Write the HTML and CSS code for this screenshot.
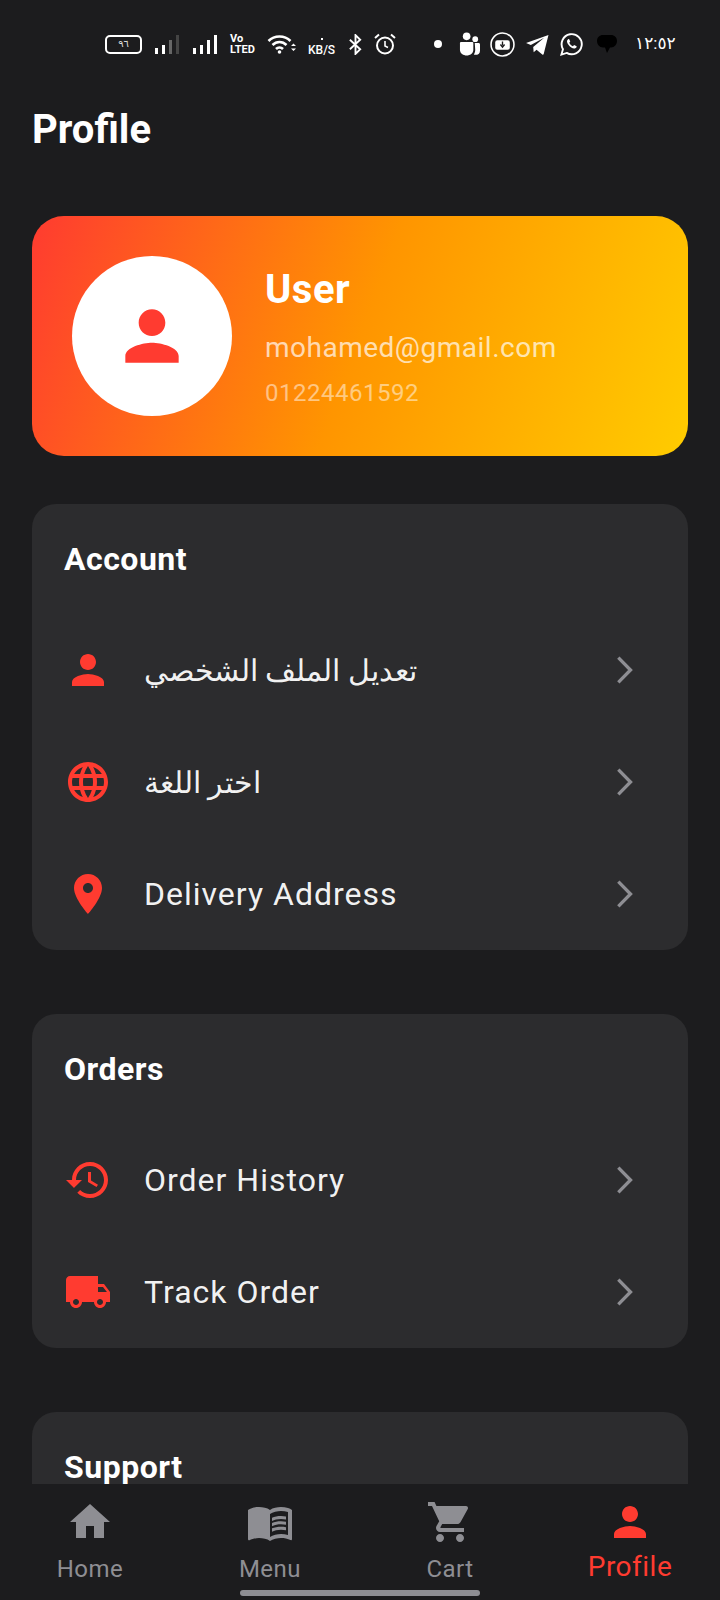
FILE: index.html
```html
<!DOCTYPE html>
<html lang="en">
<head>
    <meta charset="UTF-8">
    <meta name="viewport" content="width=device-width, initial-scale=1.0">
    <title>Profile</title>
    <link rel="stylesheet" href="styles.css">
</head>
<body>

<svg class="sprite" aria-hidden="true">
    <symbol id="i-person" viewBox="0 0 24 24"><path d="M12 12c2.21 0 4-1.79 4-4s-1.79-4-4-4-4 1.79-4 4 1.79 4 4 4zm0 2c-2.67 0-8 1.34-8 4v2h16v-2c0-2.66-5.33-4-8-4z"/></symbol>
    <symbol id="i-language" viewBox="0 0 24 24"><path d="M11.99 2C6.47 2 2 6.48 2 12s4.47 10 9.99 10C17.52 22 22 17.52 22 12S17.52 2 11.99 2zm6.93 6h-2.95c-.32-1.25-.78-2.45-1.38-3.56 1.84.63 3.37 1.91 4.33 3.56zM12 4.04c.83 1.2 1.48 2.53 1.91 3.96h-3.82c.43-1.43 1.08-2.76 1.91-3.96zM4.26 14C4.1 13.36 4 12.69 4 12s.1-1.36.26-2h3.38c-.08.66-.14 1.32-.14 2 0 .68.06 1.34.14 2H4.26zm.82 2h2.95c.32 1.25.78 2.45 1.38 3.56-1.84-.63-3.37-1.9-4.33-3.56zm2.95-8H5.08c.96-1.66 2.49-2.93 4.33-3.56C8.81 5.55 8.35 6.75 8.03 8zM12 19.96c-.83-1.2-1.48-2.53-1.91-3.96h3.82c-.43 1.43-1.08 2.76-1.91 3.96zM14.34 14H9.66c-.09-.66-.16-1.32-.16-2 0-.68.07-1.35.16-2h4.68c.09.65.16 1.32.16 2 0 .68-.07 1.34-.16 2zm.25 5.56c.6-1.11 1.06-2.31 1.38-3.56h2.95c-.96 1.65-2.49 2.93-4.33 3.56zM16.36 14c.08-.66.14-1.32.14-2 0-.68-.06-1.34-.14-2h3.38c.16.64.26 1.31.26 2s-.1 1.36-.26 2h-3.38z"/></symbol>
    <symbol id="i-location" viewBox="0 0 24 24"><path d="M12 2C8.13 2 5 5.13 5 9c0 5.25 7 13 7 13s7-7.75 7-13c0-3.87-3.13-7-7-7zm0 9.5c-1.38 0-2.5-1.12-2.5-2.5s1.12-2.5 2.5-2.5 2.5 1.12 2.5 2.5-1.12 2.5-2.5 2.5z"/></symbol>
    <symbol id="i-history" viewBox="0 0 24 24"><path d="M13 3c-4.97 0-9 4.03-9 9H1l3.89 3.89.07.14L9 12H6c0-3.87 3.13-7 7-7s7 3.13 7 7-3.13 7-7 7c-1.93 0-3.68-.79-4.94-2.06l-1.42 1.42C8.27 19.99 10.51 21 13 21c4.97 0 9-4.03 9-9s-4.03-9-9-9zm-1 5v5l4.28 2.54.72-1.21-3.5-2.08V8H12z"/></symbol>
    <symbol id="i-truck" viewBox="0 0 24 24"><path d="M20 8h-3V4H3c-1.1 0-2 .9-2 2v11h2c0 1.66 1.34 3 3 3s3-1.34 3-3h6c0 1.66 1.34 3 3 3s3-1.34 3-3h2v-5l-3-4zM6 18.5c-.83 0-1.5-.67-1.5-1.5s.67-1.5 1.5-1.5 1.5.67 1.5 1.5-.67 1.5-1.5 1.5zm13.5-9l1.96 2.5H17V9.5h2.5zm-1.5 9c-.83 0-1.5-.67-1.5-1.5s.67-1.5 1.5-1.5 1.5.67 1.5 1.5-.67 1.5-1.5 1.5z"/></symbol>
    <symbol id="i-chevron" viewBox="0 0 24 24"><path d="M8.6 4.6L15.9 12l-7.3 7.4" fill="none" stroke="currentColor" stroke-width="2"/></symbol>
    <symbol id="i-home" viewBox="0 0 24 24"><path d="M10 20v-6h4v6h5v-8h3L12 3 2 12h3v8z"/></symbol>
    <symbol id="i-book" viewBox="0 0 24 24"><path d="M21 5c-1.11-.35-2.33-.5-3.5-.5-1.95 0-4.05.4-5.5 1.5-1.45-1.1-3.55-1.5-5.5-1.5S2.45 4.9 1 6v14.65c0 .25.25.5.5.5.1 0 .15-.05.25-.05C3.1 20.45 5.05 20 6.5 20c1.95 0 4.05.4 5.5 1.5 1.35-.85 3.8-1.5 5.5-1.5 1.65 0 3.35.3 4.75 1.05.1.05.15.05.25.05.25 0 .5-.25.5-.5V6c-.6-.45-1.25-.75-2-1zm0 13.5c-1.1-.35-2.3-.5-3.5-.5-1.7 0-4.15.65-5.5 1.5V8c1.35-.85 3.8-1.5 5.5-1.5 1.2 0 2.4.15 3.5.5v11.5z"/><path d="M17.5 10.5c.88 0 1.73.09 2.5.26V9.24c-.79-.15-1.64-.24-2.5-.24-1.7 0-3.24.29-4.5.83v1.66c1.13-.64 2.7-.99 4.5-.99zM13 12.49v1.66c1.13-.64 2.7-.99 4.5-.99.88 0 1.73.09 2.5.26V11.9c-.79-.15-1.64-.24-2.5-.24-1.7 0-3.24.3-4.5.83zM17.5 14.33c-1.7 0-3.24.29-4.5.83v1.66c1.13-.64 2.7-.99 4.5-.99.88 0 1.73.09 2.5.26v-1.52c-.79-.16-1.64-.24-2.5-.24z"/></symbol>
    <symbol id="i-cart" viewBox="0 0 24 24"><path d="M7 18c-1.1 0-1.99.9-1.99 2S5.9 22 7 22s2-.9 2-2-.9-2-2-2zM1 2v2h2l3.6 7.59-1.35 2.45c-.16.28-.25.61-.25.96 0 1.1.9 2 2 2h12v-2H7.42c-.14 0-.25-.11-.25-.25l.03-.12.9-1.63h7.45c.75 0 1.41-.41 1.75-1.03l3.58-6.47c.08-.14.12-.31.12-.48 0-.55-.45-1-1-1H5.21l-.94-2H1zm16 16c-1.1 0-1.99.9-1.99 2s.89 2 1.99 2 2-.9 2-2-.9-2-2-2z"/></symbol>
</svg>

<div class="screen">
    <div class="statusbar">
        <div class="battery"><span>٩٦</span></div>
        <svg class="sb-signal" viewBox="0 0 24 20"><rect x="0" y="14" width="3" height="6" fill="#fff"/><rect x="7" y="11" width="3" height="9" fill="#fff"/><rect x="14" y="6" width="3" height="14" fill="#666"/><rect x="21" y="1" width="3" height="19" fill="#444"/></svg>
        <svg class="sb-signal" viewBox="0 0 24 20" fill="#fff"><rect x="0" y="14" width="3" height="6"/><rect x="7" y="11" width="3" height="9"/><rect x="14" y="6" width="3" height="14"/><rect x="21" y="1" width="3" height="19"/></svg>
        <div class="volte">Vo<br>LTED</div>
        <svg class="sb-wifi" viewBox="0 0 29 20" fill="none" stroke="#fff" stroke-width="2.6"><path d="M1 7c6-6 16-6 22 0"/><path d="M5 11c4-4 10-4 14 0"/><path d="M8.500 15c2-2 5-2 7 0"/><circle cx="12" cy="18" r="1.800" fill="#fff" stroke="none"/><path d="M23.500 12l2.500-2.500 2.500 2.500zM23.500 14.500l2.500 2.500 2.500-2.500z" fill="#fff" stroke="none"/></svg>
        <div class="kbs"><i></i>KB/S</div>
        <svg class="sb-bt" viewBox="0 0 16 22" fill="none" stroke="#fff" stroke-width="2"><path d="M2 6l11 10-5 5V1l5 5L2 16"/></svg>
        <svg class="sb-alarm" viewBox="0 0 22 22" fill="none" stroke="#fff" stroke-width="2"><circle cx="11" cy="12.500" r="8"/><path d="M11 8v5l3 1.500" stroke-width="1.600"/><path d="M1 5l4-3.500M21 5l-4-3.500"/></svg>
        <i class="sb-dot"></i>
        <svg class="sb-teams" viewBox="0 0 22 24" fill="#fff"><circle cx="8" cy="4" r="4"/><circle cx="17" cy="7" r="3"/><path d="M1 11.500c0-1 .5-1.500 1.500-1.500h11c1 0 1.500.5 1.500 1.500V18c0 8-14 8-14 0z"/><path d="M16.500 11H20c1 0 2 .5 2 1.500V19c0 4-4 5-6.500 4 1-1.500 1.500-3 1.500-5z"/></svg>
        <svg class="sb-round" viewBox="0 0 24 24"><circle cx="12" cy="12" r="11" fill="none" stroke="#fff" stroke-width="1.500"/><rect x="5" y="8" width="14" height="9" rx="2" fill="#fff"/><path d="M12 9v4M10 12l2 2.500 2-2.500" stroke="#1c1c1e" stroke-width="1.300" fill="none"/></svg>
        <svg class="sb-tg" viewBox="0 0 24 22" fill="#fff"><path d="M23.500 1L18.500 21c-.2.8-1 .9-1.500.5l-6-5-3 2.500-.5-5.500L19 4 5 11.500 0 9.500z"/></svg>
        <svg class="sb-wa" viewBox="0 0 24 24"><path d="M1.500 22.500l1.600-5.600a10.500 10.500 0 1 1 3.900 3.900z" fill="none" stroke="#fff" stroke-width="2"/><path d="M8.500 6.500c-1.800 1.300-1.500 3.500.5 6s4.800 4.500 7 3.500c1.300-.6 1.600-1.800 1.300-2.200l-2.600-1.300-1.200 1.300c-1.500-.6-3-2-3.800-3.700l1-1.200-1.100-2.500c-.4-.3-.9-.3-1.100.1z" fill="#fff"/></svg>
        <svg class="sb-bubble" viewBox="0 0 20 18" fill="#000"><path d="M6 0h8c3.500 0 6 2.500 6 6s-2.500 6.500-6 6.500h-1L10 18l-2-5.500H6c-3.500 0-6-3-6-6.500s2.500-6 6-6z"/></svg>
        <span class="sb-time">١٢:٥٢</span>
    </div>

    <div class="page">
        <h1 class="page-title">Profile</h1>

        <div class="hero">
            <div class="avatar"><svg class="avatar-icon"><use href="#i-person"/></svg></div>
            <div class="hero-info">
                <div class="hero-name">User</div>
                <div class="hero-email">mohamed@gmail.com</div>
                <div class="hero-phone">01224461592</div>
            </div>
        </div>

        <section class="card">
            <h2 class="card-title">Account</h2>
            <div class="row">
                <svg class="row-icon"><use href="#i-person"/></svg>
                <span class="row-label arabic">تعديل الملف الشخصي</span>
                <svg class="row-arrow"><use href="#i-chevron"/></svg>
            </div>
            <div class="row">
                <svg class="row-icon"><use href="#i-language"/></svg>
                <span class="row-label arabic">اختر اللغة</span>
                <svg class="row-arrow"><use href="#i-chevron"/></svg>
            </div>
            <div class="row">
                <svg class="row-icon"><use href="#i-location"/></svg>
                <span class="row-label">Delivery Address</span>
                <svg class="row-arrow"><use href="#i-chevron"/></svg>
            </div>
        </section>

        <section class="card">
            <h2 class="card-title">Orders</h2>
            <div class="row">
                <svg class="row-icon"><use href="#i-history"/></svg>
                <span class="row-label">Order History</span>
                <svg class="row-arrow"><use href="#i-chevron"/></svg>
            </div>
            <div class="row">
                <svg class="row-icon"><use href="#i-truck"/></svg>
                <span class="row-label">Track Order</span>
                <svg class="row-arrow"><use href="#i-chevron"/></svg>
            </div>
        </section>

        <section class="card card-last">
            <h2 class="card-title">Support</h2>
        </section>
    </div>

    <nav class="tabbar">
        <a class="tab"><svg class="tab-icon"><use href="#i-home"/></svg><span>Home</span></a>
        <a class="tab"><svg class="tab-icon"><use href="#i-book"/></svg><span>Menu</span></a>
        <a class="tab"><svg class="tab-icon"><use href="#i-cart"/></svg><span>Cart</span></a>
        <a class="tab active"><svg class="tab-icon"><use href="#i-person"/></svg><span>Profile</span></a>
        <div class="home-bar"></div>
    </nav>
</div>

</body>
</html>
```

FILE: styles.css
```css
* {
    box-sizing: border-box;
}

html, body {
    margin: 0;
    padding: 0;
    background-color: #1c1c1e;
}

body {
    font-family: Roboto, "DejaVu Sans", sans-serif;
    color: #fff;
}

.sprite {
    display: none;
}

svg {
    display: block;
}

.screen {
    display: flex;
    flex-direction: column;
    width: 720px;
    height: 1600px;
    overflow: hidden;
}

/* status bar */
.statusbar {
    display: flex;
    align-items: center;
    flex: none;
    height: 88px;
    padding-left: 105px;
}

.battery {
    width: 37px;
    height: 19px;
    border: 2px solid #fff;
    border-radius: 5px;
    font-size: 10px;
    line-height: 14px;
    text-align: center;
    color: #ddd;
}

.sb-signal {
    width: 26px;
    height: 20px;
    margin-left: 12px;
}

.volte {
    width: 25px;
    margin-left: 12px;
    font-size: 11px;
    line-height: 11px;
    font-weight: 700;
}

.sb-wifi {
    width: 30px;
    height: 20px;
    margin-left: 12px;
}

.kbs {
    position: relative;
    width: 28px;
    margin-left: 11px;
    padding-top: 12px;
    font-size: 12px;
    font-weight: 500;
    line-height: 12px;
}

.kbs i {
    position: absolute;
    top: 6px;
    left: 13px;
    width: 2px;
    height: 2px;
    background: #fff;
}

.sb-bt {
    width: 15px;
    height: 21px;
    margin-left: 12px;
}

.sb-alarm {
    width: 22px;
    height: 22px;
    margin-left: 11px;
}

.sb-dot {
    width: 8px;
    height: 8px;
    margin-left: 38px;
    border-radius: 50%;
    background: #fff;
}

.sb-teams {
    width: 21px;
    height: 24px;
    margin-left: 17px;
}

.sb-round {
    width: 25px;
    height: 25px;
    margin-left: 10px;
}

.sb-tg {
    width: 23px;
    height: 21px;
    margin-left: 11px;
}

.sb-wa {
    width: 23px;
    height: 23px;
    margin-left: 11px;
}

.sb-bubble {
    width: 20px;
    height: 18px;
    margin-left: 14px;
}

.sb-time {
    margin-left: 18px;
    margin-bottom: 2px;
    font-size: 17px;
    color: #fff;
}

/* scrolling part */
.page {
    flex: 1;
    min-height: 0;
    overflow: hidden;
    padding: 0 32px;
}

.page-title {
    margin: 15px 0 59px;
    font-size: 40px;
    line-height: 54px;
    font-weight: 700;
}

.hero {
    display: flex;
    align-items: center;
    gap: 33px;
    height: 240px;
    padding: 0 40px;
    border-radius: 32px;
    background: linear-gradient(110deg, #ff3b30, #ff9500 50%, #ffcc00);
}

.avatar {
    display: flex;
    align-items: center;
    justify-content: center;
    width: 160px;
    height: 160px;
    border-radius: 50%;
    background: #fff;
    color: #ff3b30;
}

.avatar-icon {
    width: 80px;
    height: 80px;
    fill: currentColor;
}

.hero-info {
    padding-top: 2px;
}

.hero-name {
    margin-top: 1px;
    font-size: 40px;
    line-height: 48px;
    font-weight: 700;
    letter-spacing: 0.5px;
}

.hero-email {
    margin-top: 16px;
    font-size: 28px;
    line-height: 36px;
    letter-spacing: 0.5px;
    color: rgba(255, 255, 255, 0.7);
}

.hero-phone {
    margin-top: 11px;
    font-size: 24px;
    line-height: 32px;
    letter-spacing: 0.5px;
    color: rgba(255, 255, 255, 0.5);
}

.card {
    margin-top: 48px;
    margin-bottom: 64px;
    padding: 0 32px;
    border-radius: 24px;
    background: #2c2c2e;
}

.card-last {
    min-height: 200px;
    margin-bottom: 0;
}

.card-title {
    height: 110px;
    margin: 0;
    padding-top: 32px;
    font-size: 32px;
    line-height: 46px;
    font-weight: 700;
    letter-spacing: 0.5px;
}

.row {
    display: flex;
    align-items: center;
    height: 112px;
}

.row-icon {
    flex: none;
    width: 48px;
    height: 48px;
    fill: #ff3b30;
}

.row-label {
    flex: 1;
    margin-left: 32px;
    font-size: 32px;
    letter-spacing: 1px;
    color: rgba(255, 255, 255, 0.95);
}

.row-label.arabic {
    font-size: 30px;
    font-weight: 300;
    letter-spacing: 0;
}

.row-arrow {
    flex: none;
    width: 40px;
    height: 40px;
    margin-right: 12px;
    color: #8e8e93;
}

/* bottom nav */
.tabbar {
    position: relative;
    display: grid;
    grid-template-columns: repeat(4, 1fr);
    flex: none;
    height: 116px;
    background: #1c1c1e;
}

.tab {
    display: flex;
    flex-direction: column;
    align-items: center;
    padding-top: 14px;
    font-size: 24px;
    line-height: 28px;
    letter-spacing: 0.5px;
    color: #8e8e93;
}

.tab span {
    margin-top: 9px;
}

.tab-icon {
    width: 48px;
    height: 48px;
    fill: currentColor;
}

.tab.active {
    font-size: 28px;
    color: #ff3b30;
}

.tab.active span {
    margin-top: 7px;
}

.home-bar {
    position: absolute;
    left: 240px;
    bottom: 4px;
    width: 240px;
    height: 6px;
    border-radius: 3px;
    background: #8e8e93;
}
```
